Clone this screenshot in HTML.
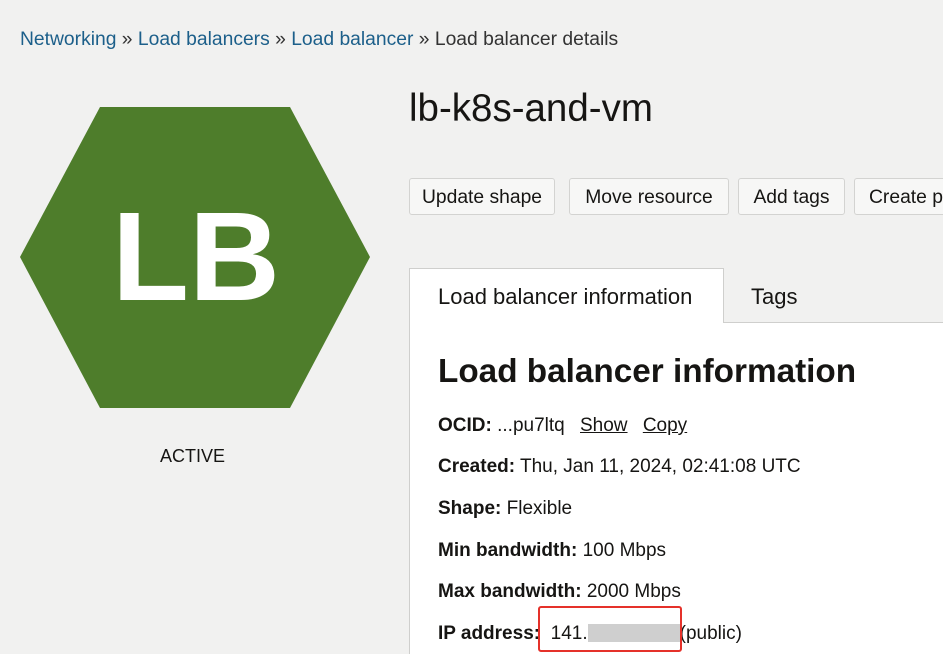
<!DOCTYPE html>
<html><head><style>
html,body{margin:0;width:943px;height:654px;overflow:hidden}
body{background:#f1f1f0;font-family:"Liberation Sans",sans-serif;position:relative;color:#161513}
.a{position:absolute;white-space:nowrap}
.bc{top:29px;left:20px;font-size:19.3px;color:#333}
.bc span{color:#1c5f8a}
.btn{position:absolute;top:178px;height:37px;border:1px solid #d3d3d1;border-radius:3px;background:#f7f7f6;font-size:19.3px;line-height:37px;text-align:center;box-sizing:border-box}
.f{left:438px;font-size:19px}
.f b{font-weight:bold}
.u{text-decoration:underline;margin-left:10px}
</style></head><body>
<div class="a bc"><span>Networking</span> » <span>Load balancers</span> » <span>Load balancer</span> » Load balancer details</div>
<svg class="a" style="left:0;top:0" width="400" height="430"><polygon points="20,257 100,107 290,107 370,257 290,408 100,408" fill="#4e7d2b"/><text x="196" y="300" font-family="Liberation Sans" font-weight="bold" font-size="126" fill="#fff" text-anchor="middle">LB</text></svg>
<div class="a" style="left:160px;top:446px;font-size:18px">ACTIVE</div>
<div class="a" style="left:409px;top:87px;font-size:38.5px">lb-k8s-and-vm</div>
<div class="btn" style="left:409px;width:146px">Update shape</div>
<div class="btn" style="left:569px;width:160px">Move resource</div>
<div class="btn" style="left:738px;width:107px">Add tags</div>
<div class="btn" style="left:854px;width:89px;text-align:left;padding-left:14px;overflow:hidden;border-right:none;border-radius:3px 0 0 3px">Create p</div>
<div class="a" style="left:409px;top:268px;width:533px;height:385px;background:#fff;border-left:1px solid #cfcfcd;border-top:1px solid #cfcfcd"></div>
<div class="a" style="left:723px;top:268px;width:220px;height:54px;background:#f1f1f0;border-bottom:1px solid #cfcfcd"></div>
<div class="a" style="left:723px;top:268px;width:1px;height:55px;background:#cfcfcd"></div>
<div class="a" style="left:438px;top:284px;font-size:22px">Load balancer information</div>
<div class="a" style="left:751px;top:284px;font-size:22px">Tags</div>
<div class="a" style="left:438px;top:353px;font-size:33.3px;font-weight:bold">Load balancer information</div>
<div class="a f" style="top:415px"><b>OCID:</b> ...pu7ltq <span class="u">Show</span> <span class="u">Copy</span></div>
<div class="a f" style="top:456px"><b>Created:</b> Thu, Jan 11, 2024, 02:41:08 UTC</div>
<div class="a f" style="top:498px"><b>Shape:</b> Flexible</div>
<div class="a f" style="top:540px"><b>Min bandwidth:</b> 100 Mbps</div>
<div class="a f" style="top:581px"><b>Max bandwidth:</b> 2000 Mbps</div>
<div class="a f" style="top:623px"><b>IP address:</b>&nbsp;&nbsp;141.<span style="display:inline-block;width:92px;height:18px;background:#cfcfcf;vertical-align:-3px"></span>(public)</div>
<div class="a" style="left:538px;top:606px;width:140px;height:42px;border:2px solid #e5312a;border-radius:3px"></div>
</body></html>
